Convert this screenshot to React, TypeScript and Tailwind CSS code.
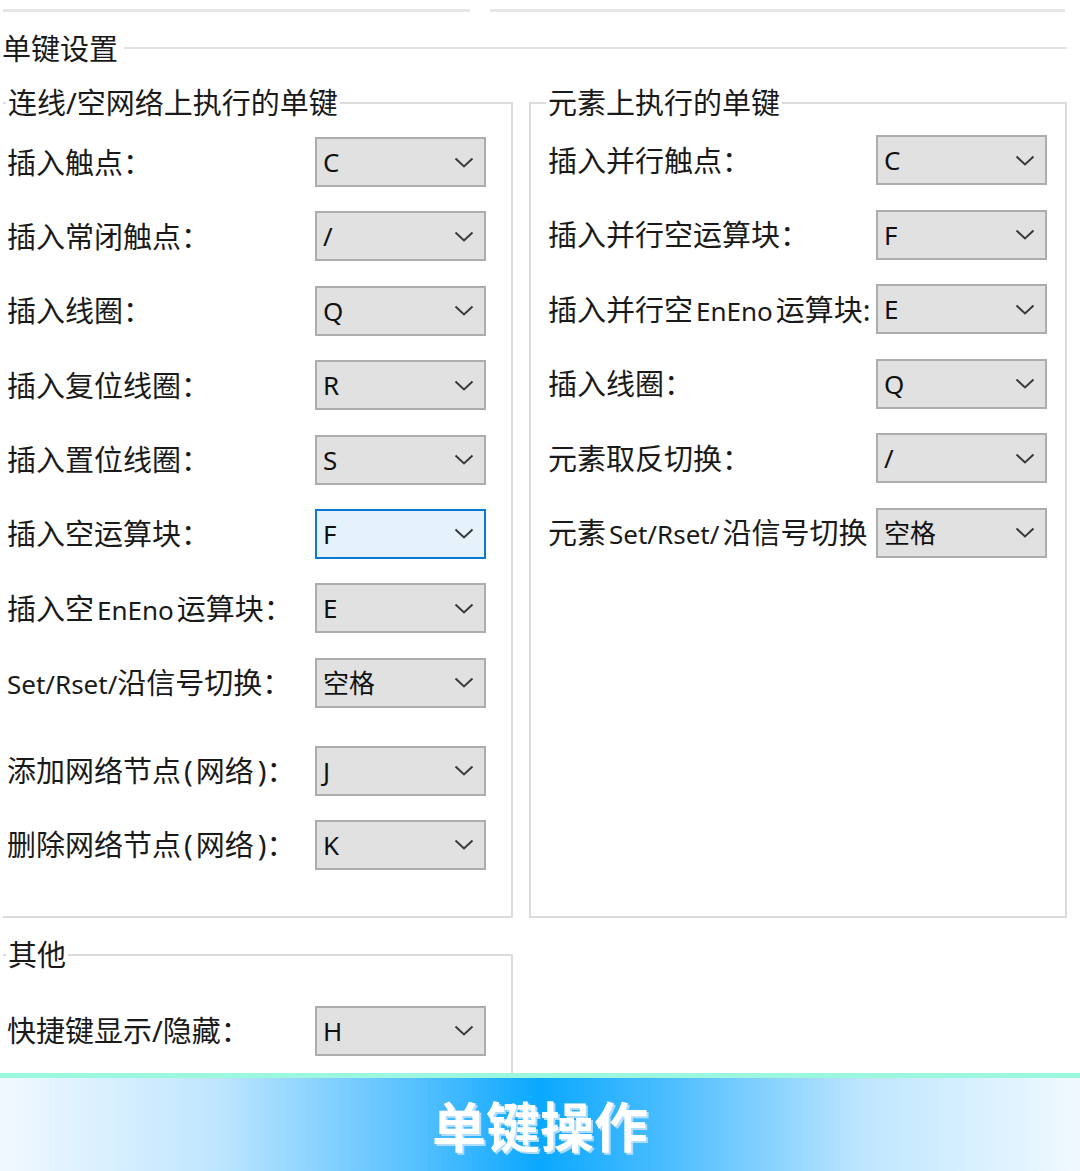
import React from 'react';

interface Binding {
  label: React.ReactNode;
  value: string;
  focused?: boolean;
}

const FONT = '"Noto Sans", "Noto Sans CJK SC", sans-serif';

// latin fragments inside the chinese labels are a little smaller
function Lat({ children, gap }: { children: React.ReactNode; gap?: boolean }) {
  return <span className={`text-[26px] ${gap ? 'mx-[3px]' : ''}`}>{children}</span>;
}

const leftBindings: Binding[] = [
  { label: '插入触点：', value: 'C' },
  { label: '插入常闭触点：', value: '/' },
  { label: '插入线圈：', value: 'Q' },
  { label: '插入复位线圈：', value: 'R' },
  { label: '插入置位线圈：', value: 'S' },
  { label: '插入空运算块：', value: 'F', focused: true },
  { label: <>插入空<Lat gap>EnEno</Lat>运算块：</>, value: 'E' },
  { label: <><Lat>Set/Rset/</Lat>沿信号切换：</>, value: '空格' },
];

const leftNodeBindings: Binding[] = [
  { label: <>添加网络节点<span className="mx-[3px]">(</span>网络<span className="ml-[4px]">)</span>：</>, value: 'J' },
  { label: <>删除网络节点<span className="mx-[3px]">(</span>网络<span className="ml-[4px]">)</span>：</>, value: 'K' },
];

const rightBindings: Binding[] = [
  { label: '插入并行触点：', value: 'C' },
  { label: '插入并行空运算块：', value: 'F' },
  { label: <>插入并行空<Lat gap>EnEno</Lat>运算块:</>, value: 'E' },
  { label: '插入线圈：', value: 'Q' },
  { label: '元素取反切换：', value: '/' },
  { label: <>元素<Lat gap>Set/Rset/</Lat>沿信号切换</>, value: '空格' },
];

function Chevron() {
  return (
    <svg width="20" height="11" viewBox="0 0 20 11" className="shrink-0">
      <polyline points="1.5,1.5 10,9.5 18.5,1.5" fill="none" stroke="#3a3a3a" strokeWidth="2" />
    </svg>
  );
}

function Combo({ value, focused }: { value: string; focused?: boolean }) {
  return (
    <div
      className={`flex h-[50px] w-[171px] shrink-0 items-center justify-between border-2 pl-[6px] pr-[10px] text-[26px] text-[#111] ${
        focused ? 'border-[#0a78d7] bg-[#e5f1fb]' : 'border-[#adadad] bg-[#e1e1e1]'
      }`}
    >
      <span className="leading-none">{value}</span>
      <Chevron />
    </div>
  );
}

function Row({ binding, labelWidth }: { binding: Binding; labelWidth: string }) {
  return (
    <div className="flex h-[50px] items-center">
      <div className={`${labelWidth} shrink-0 overflow-visible whitespace-nowrap text-[29px] leading-none text-[#1a1a1a]`}>
        {binding.label}
      </div>
      <Combo value={binding.value} focused={binding.focused} />
    </div>
  );
}

export default function App() {
  return (
    <div className="relative h-[1171px] w-[1080px] overflow-hidden bg-white" style={{ fontFamily: FONT }}>
      {/* top separators */}
      <div className="flex pt-[9px]">
        <div className="ml-[3px] h-[3px] w-[467px] bg-[#e6e6e6]" />
        <div className="ml-[20px] h-[3px] w-[575px] bg-[#e6e6e6]" />
      </div>

      {/* section heading */}
      <div className="mt-[18px] flex h-[36px] items-center">
        <span className="ml-[2px] text-[29px] leading-none text-[#1a1a1a]">单键设置</span>
        <div className="ml-[6px] h-[2px] w-[943px] bg-[#e3e3e3]" />
      </div>

      {/* two group boxes */}
      <div className="mt-[19px] flex gap-[16px]">
        <fieldset className="ml-[3px] w-[510px] border-2 border-l-0 border-[#dcdcdc] p-0">
          <legend className="ml-[3px] px-[2px] text-[29px] leading-[36px] text-[#1a1a1a]">连线/空网络上执行的单键</legend>
          <div className="flex flex-col pb-[46px] pl-[4px] pt-[16px]">
            <div className="flex flex-col gap-[24.4px]">
              {leftBindings.map((b, i) => (
                <Row key={i} binding={b} labelWidth="w-[308px]" />
              ))}
            </div>
            <div className="mt-[38px] flex flex-col gap-[24px]">
              {leftNodeBindings.map((b, i) => (
                <Row key={i} binding={b} labelWidth="w-[308px]" />
              ))}
            </div>
          </div>
        </fieldset>

        <fieldset className="w-[538px] border-2 border-[#dcdcdc] p-0">
          <legend className="ml-[15px] px-[2px] text-[29px] leading-[36px] text-[#1a1a1a]">元素上执行的单键</legend>
          <div className="flex flex-col gap-[24.6px] pl-[17px] pt-[14px]">
            {rightBindings.map((b, i) => (
              <Row key={i} binding={b} labelWidth="w-[328px]" />
            ))}
          </div>
        </fieldset>
      </div>

      {/* other */}
      <fieldset className="ml-[3px] mt-[19px] h-[136px] w-[510px] border-2 border-b-0 border-l-0 border-[#dcdcdc] p-0">
        <legend className="ml-[3px] px-[2px] text-[29px] leading-[36px] text-[#1a1a1a]">其他</legend>
        <div className="pl-[4px] pt-[33px]">
          <Row binding={{ label: '快捷键显示/隐藏：', value: 'H' }} labelWidth="w-[308px]" />
        </div>
      </fieldset>

      {/* banner */}
      <div className="absolute bottom-0 left-0 w-[1080px]">
        <div className="h-[5px] bg-[#9cf7df]" />
        <div className="flex h-[93px] items-center justify-center bg-[linear-gradient(90deg,#f1f9ff_0%,#bfe6ff_20%,#4dbdff_40%,#0aa8ff_50%,#4dbdff_62%,#bfe6ff_80%,#f1f9ff_100%)]">
          <span
            className="text-[54px] font-bold leading-none text-white [text-shadow:2px_2px_0_rgba(190,225,255,0.9)]"
            style={{ fontFamily: '"Noto Sans CJK SC", sans-serif' }}
          >
            单键操作
          </span>
        </div>
      </div>
    </div>
  );
}
